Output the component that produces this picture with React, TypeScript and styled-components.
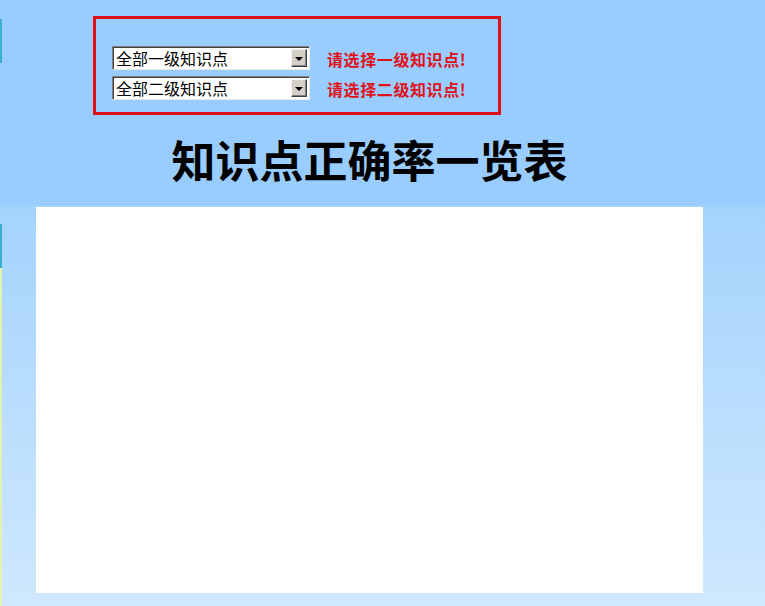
import React from 'react';
import styled, { createGlobalStyle } from 'styled-components';

const GlobalStyle = createGlobalStyle`
  html, body {
    margin: 0;
    padding: 0;
    height: 100%;
  }
  body {
    font-family: "Noto Sans CJK SC", "Liberation Sans", sans-serif;
    background:
      linear-gradient(to bottom, transparent 0 19px, #3aaed0 19px 63px, transparent 63px 224px, #3aaed0 224px 268px, #e4f2b0 268px 100%) left top / 2px 100% no-repeat,
      linear-gradient(to bottom, #99ccff 0 205px, #a3d3fc 205px, #cfe8ff 100%);
  }
`;

const Page = styled.div`
  width: 765px;
  height: 606px;
  padding-top: 16px;
  box-sizing: border-box;
  display: flex;
  flex-direction: column;
`;

const FilterBox = styled.div`
  margin-left: 93px;
  width: 408px;
  height: 99px;
  box-sizing: border-box;
  border: 3px solid #e01018;
  padding: 27px 0 0 16px;
  display: flex;
  flex-direction: column;
  gap: 6px;
`;

const FilterRow = styled.div`
  display: flex;
  align-items: center;
  gap: 17px;
`;

const SelectFrame = styled.div`
  width: 198px;
  height: 24px;
  box-sizing: border-box;
  display: flex;
  align-items: center;
  background: #fff;
  border-top: 1px solid #808080;
  border-left: 1px solid #808080;
  border-right: 1px solid #e8e8e8;
  border-bottom: 1px solid #e8e8e8;
  box-shadow: inset 1px 1px 0 #404040;
  padding: 1px 2px 1px 1px;
`;

const NativeSelect = styled.select`
  appearance: none;
  flex: 1;
  min-width: 0;
  height: 100%;
  border: none;
  outline: none;
  background: transparent;
  padding: 0 0 0 2px;
  font-family: "Noto Sans CJK SC", "Liberation Sans", sans-serif;
  font-size: 16px;
  line-height: 20px;
  color: #000;
`;

const DropButton = styled.span`
  width: 16px;
  height: 18px;
  box-sizing: border-box;
  background: #d4d0c8;
  border-top: 1px solid #f4f4f4;
  border-left: 1px solid #f4f4f4;
  border-right: 1px solid #404040;
  border-bottom: 1px solid #404040;
  box-shadow: inset -1px -1px 0 #808080;
  display: flex;
  align-items: center;
  justify-content: center;
  &::after {
    content: '';
    width: 0;
    height: 0;
    border-left: 4px solid transparent;
    border-right: 4px solid transparent;
    border-top: 4px solid #000;
    margin-top: 1px;
  }
`;

const Hint = styled.span`
  color: #e01018;
  font-size: 16px;
  font-weight: 700;
  line-height: 20px;
  letter-spacing: 0.6px;
  margin-top: 2px;
`;

const Title = styled.h1`
  margin: 20px 0 0 36px;
  width: 667px;
  text-align: center;
  font-family: "Noto Sans CJK SC", serif;
  font-size: 44px;
  font-weight: 600;
  line-height: 48px;
  color: #000;
`;

const ChartPanel = styled.div`
  margin: 24px 0 0 36px;
  width: 667px;
  height: 386px;
  background: #fff;
`;

type Filter = { option: string; hint: string };

const filters: Filter[] = [
  { option: '全部一级知识点', hint: '请选择一级知识点!' },
  { option: '全部二级知识点', hint: '请选择二级知识点!' },
];

export default function App() {
  return (
    <>
      <GlobalStyle />
      <Page>
        <FilterBox>
          {filters.map((f) => (
            <FilterRow key={f.option}>
              <SelectFrame>
                <NativeSelect defaultValue={f.option}>
                  <option>{f.option}</option>
                </NativeSelect>
                <DropButton />
              </SelectFrame>
              <Hint>{f.hint}</Hint>
            </FilterRow>
          ))}
        </FilterBox>
        <Title>知识点正确率一览表</Title>
        <ChartPanel />
      </Page>
    </>
  );
}
